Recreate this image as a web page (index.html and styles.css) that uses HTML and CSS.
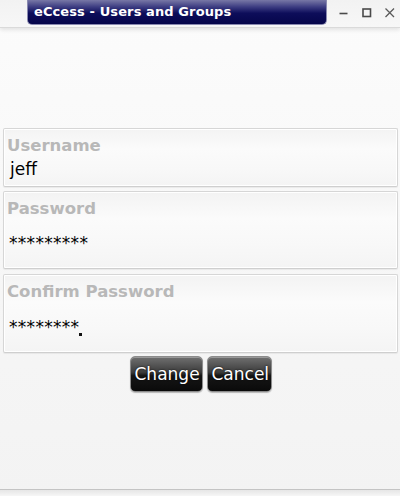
FILE: index.html
```html
<!DOCTYPE html>
<html>
<head>
<meta charset="utf-8">
<link rel="stylesheet" href="styles.css">
</head>
<body>
<div class="window">
  <header class="titlebar">
    <div class="title">eCcess - Users and Groups</div>
    <div class="controls">
      <svg class="ctl" width="14" height="14" viewBox="0 0 14 14"><path d="M2.5 7.5h8" stroke="#4a4a4a" stroke-width="1.6" fill="none"/></svg>
      <svg class="ctl" width="14" height="14" viewBox="0 0 14 14"><rect x="3" y="3" width="7.5" height="7.5" stroke="#4a4a4a" stroke-width="1.6" fill="none"/></svg>
      <svg class="ctl" width="14" height="14" viewBox="0 0 14 14"><path d="M2.5 2.5l8.5 8.5M11 2.5l-8.5 8.5" stroke="#5a5a5a" stroke-width="1.3" fill="none"/></svg>
    </div>
  </header>
  <main class="content">
    <div class="field field-user">
      <div class="label">Username</div>
      <div class="value value-user">jeff</div>
    </div>
    <div class="field field-pass">
      <div class="label">Password</div>
      <div class="value value-pass">*********</div>
    </div>
    <div class="field field-confirm">
      <div class="label">Confirm Password</div>
      <div class="value value-confirm">********<span class="cursor"></span></div>
    </div>
    <div class="buttons">
      <button class="btn btn-change">Change</button>
      <button class="btn btn-cancel">Cancel</button>
    </div>
  </main>
  <footer class="footer"></footer>
</div>
</body>
</html>
```

FILE: styles.css
```css
html, body {
  margin: 0;
  padding: 0;
}
body {
  width: 400px;
  height: 496px;
  overflow: hidden;
  font-family: "DejaVu Sans", sans-serif;
  background: #f5f5f5;
}
.window {
  width: 400px;
  height: 496px;
  display: flex;
  flex-direction: column;
  background: linear-gradient(#fcfcfc 0%, #f6f6f6 60%, #f3f3f3 100%);
}
.titlebar {
  height: 27px;
  flex: none;
  display: flex;
  align-items: flex-start;
  background: linear-gradient(#f2f2f2, #f7f7f7);
  border-bottom: 1px solid #dadada;
  box-shadow: 0 2px 4px rgba(0, 0, 0, 0.10);
  position: relative;
  z-index: 1;
}
.title {
  margin-left: 27px;
  width: 300px;
  height: 25px;
  box-sizing: border-box;
  border: 1px solid #8a8ab0;
  border-top: none;
  border-radius: 0 0 5px 5px;
  background: linear-gradient(#7878a6 0%, #3a3a80 30%, #0d0d5a 55%, #06064a 100%);
  color: #ffffff;
  font-weight: bold;
  font-size: 13px;
  line-height: 24px;
  padding-left: 6px;
  letter-spacing: 0.1px;
  white-space: nowrap;
}
.controls {
  display: flex;
  gap: 9px;
  margin-left: 10px;
  margin-top: 6px;
}
.ctl {
  display: block;
}
.content {
  flex: 1;
  display: flex;
  flex-direction: column;
  padding: 100px 2px 0 3px;
}
.field {
  box-sizing: border-box;
  border: 1px solid #d6d6d6;
  border-bottom-color: #cfcfcf;
  border-radius: 2px;
  background: linear-gradient(#f3f3f3 0%, #fbfbfb 35%, #f8f8f8 70%, #f4f4f4 100%);
  box-shadow: inset 0 0 0 1px #ffffff, 0 1px 1px rgba(0, 0, 0, 0.06);
  padding: 7px 0 0 3px;
}
.field-user {
  height: 59px;
}
.field-pass {
  height: 78px;
  margin-top: 4px;
}
.field-confirm {
  height: 79px;
  margin-top: 5px;
}
.label {
  font-weight: bold;
  font-size: 16.5px;
  line-height: 19px;
  color: #b8b8b8;
  white-space: nowrap;
}
.value {
  font-size: 17px;
  line-height: 20px;
  color: #000000;
  padding-left: 2px;
  white-space: nowrap;
}
.value-user {
  margin-top: 4px;
  padding-left: 3px;
}
.value-pass {
  margin-top: 15px;
  letter-spacing: 0.3px;
}
.value-confirm {
  margin-top: 16px;
  letter-spacing: 0.3px;
  position: relative;
}
.cursor {
  position: absolute;
  left: 72px;
  top: 16px;
  width: 3px;
  height: 3px;
  background: #111;
}
.buttons {
  display: flex;
  justify-content: center;
  gap: 4px;
  margin-top: 3px;
}
.btn {
  height: 36px;
  box-sizing: border-box;
  padding: 0 4px;
  border: 1px solid #8c8c8c;
  border-radius: 5px;
  background: linear-gradient(#707070 0%, #3c3c3c 45%, #161616 55%, #0a0a0a 100%);
  box-shadow: inset 0 1px 0 rgba(255, 255, 255, 0.3), 0 1px 1px rgba(0, 0, 0, 0.25);
  color: #ffffff;
  font-family: "DejaVu Sans", sans-serif;
  font-size: 17px;
  line-height: 20px;
  text-shadow: 0 0 2px rgba(0, 0, 0, 0.9);
  cursor: pointer;
}
.btn-change {
  width: 73px;
}
.btn-cancel {
  width: 65px;
}
.footer {
  flex: none;
  height: 6px;
  border-top: 1px solid #c4c4c4;
  background: linear-gradient(#e6e6e6, #f6f6f6);
}
```
